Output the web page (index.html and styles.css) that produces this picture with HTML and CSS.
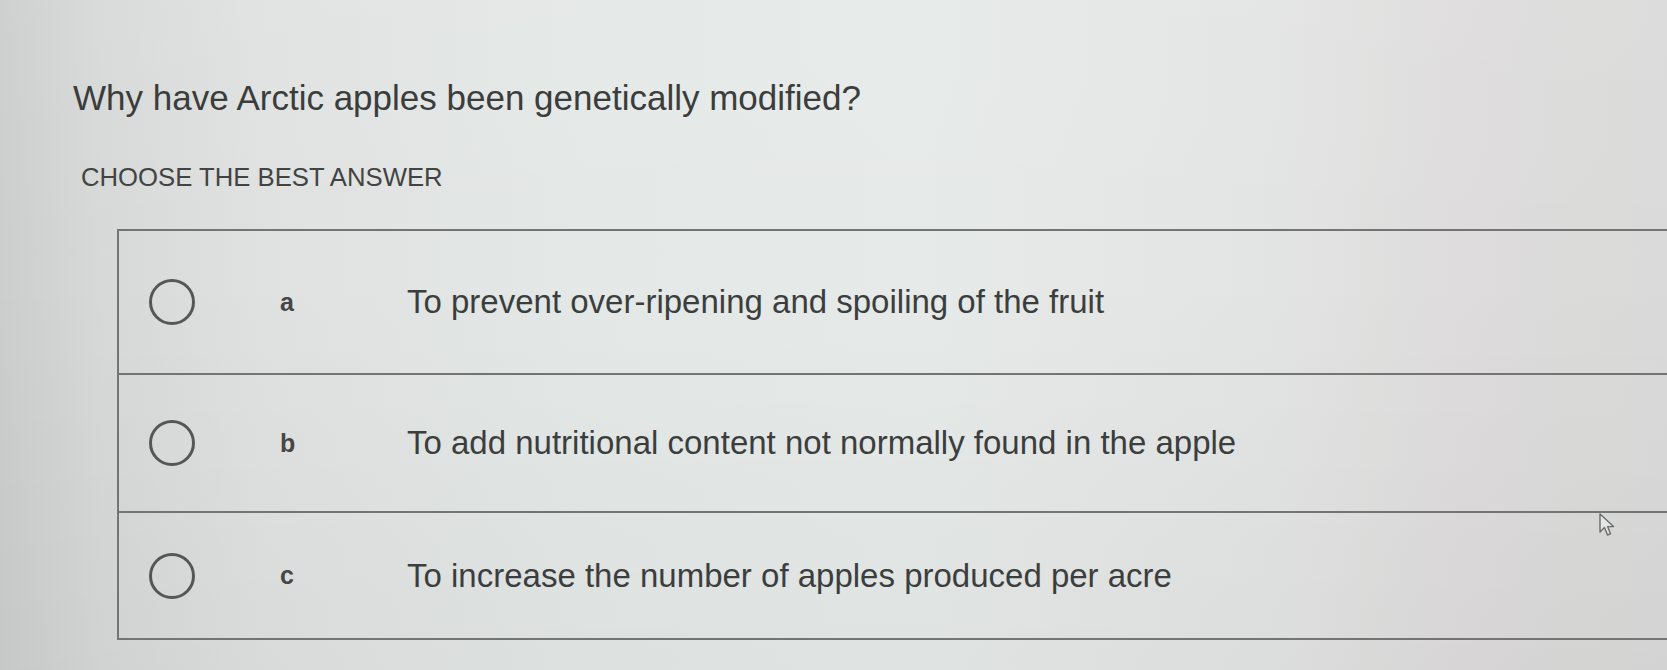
FILE: index.html
```html
<!DOCTYPE html>
<html lang="en">
<head>
<meta charset="utf-8">
<title>Question</title>
<link rel="stylesheet" href="styles.css">
</head>
<body>
<main class="page">
  <h1 class="question">Why have Arctic apples been genetically modified?</h1>
  <p class="instruction">CHOOSE THE BEST ANSWER</p>
  <div class="answers">
    <label class="answer answer-first">
      <span class="radio"></span>
      <span class="key">a</span>
      <span class="text">To prevent over-ripening and spoiling of the fruit</span>
    </label>
    <label class="answer answer-middle">
      <span class="radio"></span>
      <span class="key">b</span>
      <span class="text">To add nutritional content not normally found in the apple</span>
    </label>
    <label class="answer answer-last">
      <span class="radio"></span>
      <span class="key">c</span>
      <span class="text">To increase the number of apples produced per acre</span>
    </label>
  </div>
  <svg class="cursor" width="18" height="26" viewBox="0 0 18 26" aria-hidden="true">
    <path d="M2 2 L2 20 L6.5 15.5 L9.5 23 L12.5 21.8 L9.6 14.6 L15.5 14.6 Z" fill="#e4e6e5" stroke="#6a6c6b" stroke-width="1.4" stroke-linejoin="round"/>
  </svg>
</main>
</body>
</html>
```

FILE: styles.css
```css
html, body {
  margin: 0;
  padding: 0;
  height: 100%;
}

body {
  overflow: hidden;
  font-family: "Liberation Sans", Arial, sans-serif;
  color: #3e4040;
  background:
    linear-gradient(180deg, rgba(255,255,255,0.06) 0%, rgba(0,0,0,0) 40%, rgba(0,0,0,0.03) 100%),
    linear-gradient(90deg, #cbcecc 0%, #d6d9d7 6%, #dfe2e1 16%, #e4e8e6 35%, #e6eae8 55%, #e3e5e4 75%, #dedcdc 88%, #d9dad9 100%);
}

.page {
  position: relative;
  height: 670px;
  padding: 78px 0 0 73px;
  box-sizing: border-box;
}

.question {
  margin: 0;
  font-size: 35px;
  font-weight: 400;
  line-height: 40px;
  color: #3b3d3d;
}

.instruction {
  margin: 45px 0 0 8px;
  font-size: 25.7px;
  line-height: 29px;
  color: #424444;
}

.answers {
  margin: 37px 0 0 44px;
  border-top: 2px solid #727574;
  border-left: 2px solid #727574;
  border-bottom: 2px solid #727574;
}

.answer {
  display: grid;
  grid-template-columns: 46px 212px 1fr;
  align-items: center;
  padding-left: 30px;
  box-sizing: border-box;
}

.answer + .answer {
  border-top: 2px solid #727574;
}

.answer-first {
  height: 142px;
}

.answer-middle {
  height: 138px;
}

.answer-last {
  height: 127px;
}

.radio {
  width: 46px;
  height: 46px;
  border: 3px solid #555757;
  border-radius: 50%;
  box-sizing: border-box;
}

.key {
  padding-left: 85px;
  font-size: 25px;
  font-weight: 700;
  color: #454747;
}

.text {
  font-size: 33px;
  color: #3c3e3e;
  white-space: nowrap;
}

.cursor {
  position: absolute;
  left: 1598px;
  top: 512px;
}
```
